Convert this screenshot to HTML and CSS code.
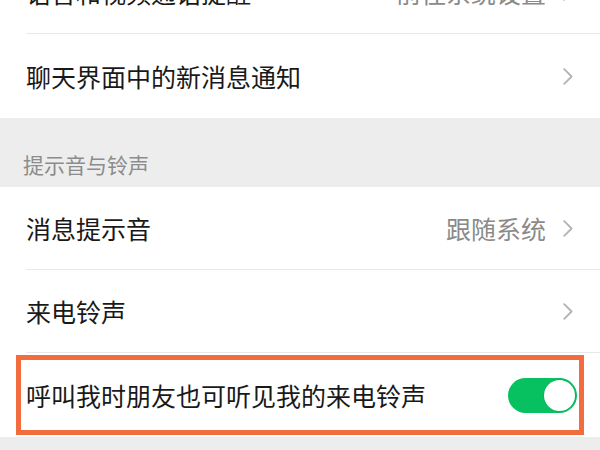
FILE: index.html
```html
<!DOCTYPE html>
<html lang="zh-CN">
<head>
<meta charset="utf-8">
<link rel="stylesheet" href="styles.css">
</head>
<body>
<div class="page">
  <div class="group">
    <div class="row first">
      <span class="label">语音和视频通话提醒</span>
      <span class="value">前往系统设置</span>
      <svg class="chev" width="10" height="17" viewBox="0 0 10 17"><path d="M1.2 1.2 L8.6 8.5 L1.2 15.8" fill="none" stroke="#b3b3b3" stroke-width="1.8" stroke-linecap="round" stroke-linejoin="round"/></svg>
    </div>
    <div class="row last">
      <span class="label">聊天界面中的新消息通知</span>
      <svg class="chev" width="10" height="17" viewBox="0 0 10 17"><path d="M1.2 1.2 L8.6 8.5 L1.2 15.8" fill="none" stroke="#b3b3b3" stroke-width="1.8" stroke-linecap="round" stroke-linejoin="round"/></svg>
    </div>
  </div>
  <div class="section-title">提示音与铃声</div>
  <div class="group">
    <div class="row">
      <span class="label">消息提示音</span>
      <span class="value">跟随系统</span>
      <svg class="chev" width="10" height="17" viewBox="0 0 10 17"><path d="M1.2 1.2 L8.6 8.5 L1.2 15.8" fill="none" stroke="#b3b3b3" stroke-width="1.8" stroke-linecap="round" stroke-linejoin="round"/></svg>
    </div>
    <div class="row">
      <span class="label">来电铃声</span>
      <svg class="chev" width="10" height="17" viewBox="0 0 10 17"><path d="M1.2 1.2 L8.6 8.5 L1.2 15.8" fill="none" stroke="#b3b3b3" stroke-width="1.8" stroke-linecap="round" stroke-linejoin="round"/></svg>
    </div>
    <div class="row last highlighted">
      <span class="label">呼叫我时朋友也可听见我的来电铃声</span>
      <span class="toggle"><span class="knob"></span></span>
      <span class="highlight"></span>
    </div>
  </div>
  <div class="footer-gap"></div>
</div>
</body>
</html>
```
FILE: styles.css
```css
html, body {
  margin: 0;
  padding: 0;
  background: #ededed;
  overflow: hidden;
}
body {
  font-family: "Noto Sans CJK SC", "Noto Sans", sans-serif;
  color: #191919;
}
.page {
  width: 600px;
  height: 450px;
  overflow: hidden;
}
.group {
  background: #ffffff;
}
.row {
  display: flex;
  align-items: center;
  height: 82px;
  margin-left: 26px;
  padding-right: 27px;
  border-bottom: 1px solid #e8e8e8;
  box-sizing: content-box;
}
.row.first {
  margin-top: -49px;
}
.row.last {
  border-bottom: none;
  height: 84px;
}
.label {
  flex: 1;
  font-size: 25px;
  line-height: 30px;
  letter-spacing: 0;
  white-space: nowrap;
}
.value {
  font-size: 25px;
  line-height: 30px;
  color: #8a8a8a;
  margin-right: 17px;
}
.chev {
  display: block;
  flex: none;
}
.section-title {
  height: 69px;
  box-sizing: border-box;
  padding: 31px 0 0 23px;
  font-size: 21px;
  line-height: 30px;
  color: #8c8c8c;
}
.toggle {
  display: flex;
  justify-content: flex-end;
  align-items: center;
  width: 69px;
  height: 35px;
  box-sizing: border-box;
  padding: 2px;
  border-radius: 18px;
  background: #07c160;
  margin-right: -4px;
}
.knob {
  width: 31px;
  height: 31px;
  border-radius: 50%;
  background: #ffffff;
  box-shadow: 0 0 0 0.5px rgba(0, 100, 40, 0.25);
}
.highlighted {
  position: relative;
}
.highlight {
  position: absolute;
  left: -10px;
  right: 16px;
  top: 2px;
  bottom: 2px;
  border: 5px solid #f36c3d;
  pointer-events: none;
}
.footer-gap {
  height: 40px;
}
```
